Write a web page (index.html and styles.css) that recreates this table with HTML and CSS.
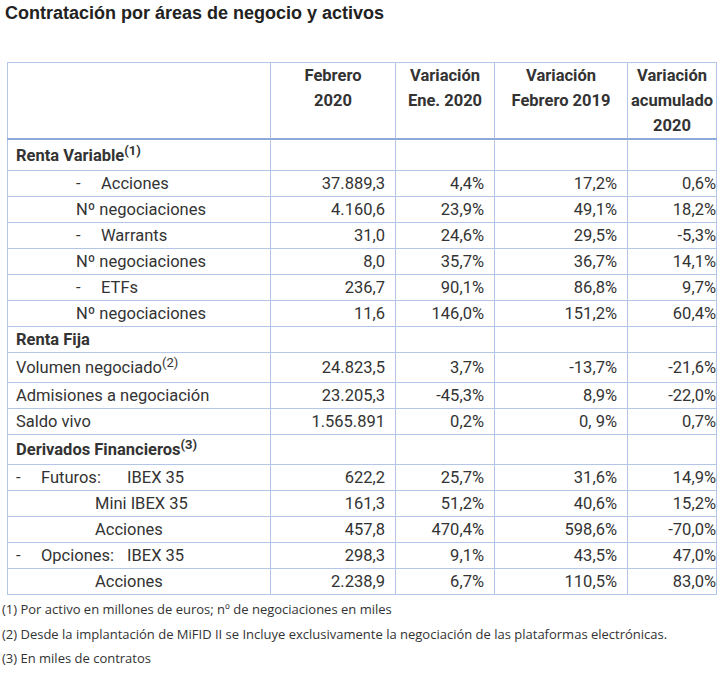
FILE: index.html
```html
<!DOCTYPE html>
<html lang="es">
<head>
<meta charset="utf-8">
<title>Contratación por áreas de negocio y activos</title>
<link rel="stylesheet" href="styles.css">
</head>
<body>
<h1 class="title">Contratación por áreas de negocio y activos</h1>
<table class="data">
  <colgroup>
    <col class="c1"><col class="c2"><col class="c3"><col class="c4"><col class="c5">
  </colgroup>
  <thead>
    <tr>
      <th></th>
      <th>Febrero<br>2020</th>
      <th>Variación<br>Ene. 2020</th>
      <th>Variación<br>Febrero 2019</th>
      <th>Variación<br>acumulado<br>2020</th>
    </tr>
  </thead>
  <tbody>
    <tr class="tall31"><td class="lbl"><b>Renta Variable</b><sup>(1)</sup></td><td></td><td></td><td></td><td></td></tr>
    <tr><td class="lbl ind"><span class="dash">-</span>Acciones</td><td>37.889,3</td><td>4,4%</td><td>17,2%</td><td>0,6%</td></tr>
    <tr><td class="lbl ind">Nº negociaciones</td><td>4.160,6</td><td>23,9%</td><td>49,1%</td><td>18,2%</td></tr>
    <tr><td class="lbl ind"><span class="dash">-</span>Warrants</td><td>31,0</td><td>24,6%</td><td>29,5%</td><td>-5,3%</td></tr>
    <tr><td class="lbl ind">Nº negociaciones</td><td>8,0</td><td>35,7%</td><td>36,7%</td><td>14,1%</td></tr>
    <tr><td class="lbl ind"><span class="dash">-</span>ETFs</td><td>236,7</td><td>90,1%</td><td>86,8%</td><td>9,7%</td></tr>
    <tr><td class="lbl ind">Nº negociaciones</td><td>11,6</td><td>146,0%</td><td>151,2%</td><td>60,4%</td></tr>
    <tr><td class="lbl"><b>Renta Fija</b></td><td></td><td></td><td></td><td></td></tr>
    <tr class="tall30"><td class="lbl">Volumen negociado<sup class="light">(2)</sup></td><td>24.823,5</td><td>3,7%</td><td>-13,7%</td><td>-21,6%</td></tr>
    <tr><td class="lbl">Admisiones a negociación</td><td>23.205,3</td><td>-45,3%</td><td>8,9%</td><td>-22,0%</td></tr>
    <tr><td class="lbl">Saldo vivo</td><td>1.565.891</td><td>0,2%</td><td>0, 9%</td><td>0,7%</td></tr>
    <tr class="tall30"><td class="lbl"><b>Derivados Financieros</b><sup>(3)</sup></td><td></td><td></td><td></td><td></td></tr>
    <tr><td class="lbl"><span class="dash">-</span><span class="kind">Futuros:</span>IBEX 35</td><td>622,2</td><td>25,7%</td><td>31,6%</td><td>14,9%</td></tr>
    <tr><td class="lbl sub">Mini IBEX 35</td><td>161,3</td><td>51,2%</td><td>40,6%</td><td>15,2%</td></tr>
    <tr><td class="lbl sub">Acciones</td><td>457,8</td><td>470,4%</td><td>598,6%</td><td>-70,0%</td></tr>
    <tr><td class="lbl"><span class="dash">-</span><span class="kind">Opciones:</span>IBEX 35</td><td>298,3</td><td>9,1%</td><td>43,5%</td><td>47,0%</td></tr>
    <tr><td class="lbl sub">Acciones</td><td>2.238,9</td><td>6,7%</td><td>110,5%</td><td>83,0%</td></tr>
  </tbody>
</table>
<div class="notes">
  <p>(1) Por activo en millones de euros; nº de negociaciones en miles</p>
  <p>(2) Desde la implantación de MiFID II se Incluye exclusivamente la negociación de las plataformas electrónicas.</p>
  <p>(3) En miles de contratos</p>
</div>
</body>
</html>
```

FILE: styles.css
```css
html, body {
  margin: 0;
  padding: 0;
  background: #ffffff;
}

body {
  color: #333333;
}

.title {
  margin: 0;
  padding: 0 0 0 5px;
  font-family: "Liberation Sans", Arial, sans-serif;
  font-weight: bold;
  font-size: 18px;
  line-height: 27px;
  color: #222222;
}

.data {
  margin: 35px 0 0 7px;
  border-collapse: collapse;
  table-layout: fixed;
  width: 709px;
  font-family: Roboto, "Liberation Sans", sans-serif;
  font-size: 16.5px;
  line-height: 25px;
  color: #333333;
}

.c1 { width: 263px; }
.c2 { width: 125px; }
.c3 { width: 99px; }
.c4 { width: 133px; }
.c5 { width: 89px; }

.data th,
.data td {
  border: 1px solid #b4c6e7;
  padding: 0 10px 0 0;
  white-space: nowrap;
}

.data th {
  border-bottom: 2px solid #8eaadb;
  font-weight: 700;
  text-align: center;
  vertical-align: top;
  padding: 0;
  height: 74px;
}

.data td {
  text-align: right;
  height: 25px;
}

.data td:last-child {
  padding-right: 0;
}

.data td.lbl {
  text-align: left;
  padding-left: 8px;
}

.data td.ind {
  padding-left: 68px;
}

.data td.sub {
  padding-left: 87px;
}

.data b {
  font-weight: 700;
}

.dash {
  display: inline-block;
  width: 25px;
}

.kind {
  display: inline-block;
  width: 86px;
}

.data sup {
  font-size: 13px;
  line-height: 0;
  vertical-align: 6px;
  font-weight: 700;
}

.data sup.light {
  font-weight: 400;
}

.data tr.tall31 td { height: 30px; }
.data tr.tall30 td { height: 29px; }

.notes {
  margin-top: 2px;
  padding-left: 2px;
  font-family: "Open Sans", sans-serif;
  font-size: 13px;
  color: #333333;
}

.notes p {
  margin: 0;
  line-height: 24.5px;
}
```
